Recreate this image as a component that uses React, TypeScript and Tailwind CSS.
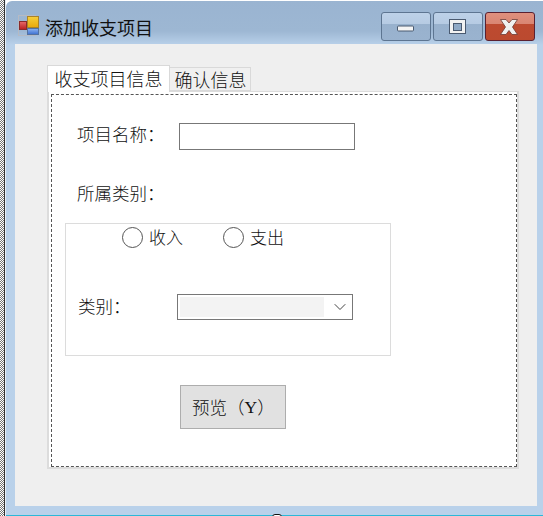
import React from 'react';
import { ChevronDown } from 'lucide-react';

const cjk = "font-['Noto_Sans_CJK_SC',sans-serif]";

const CaptionButton: React.FC<{ kind: 'min' | 'max' | 'close' }> = ({ kind }) => {
  const close = kind === 'close';
  return (
    <div
      className={
        'flex items-center justify-center w-[50px] h-[29px] rounded-[3px] border ' +
        (close
          ? 'border-[#5a2030] bg-[linear-gradient(#e0907e_0%,#d98572_41%,#bd4a30_41%,#bb4a2f_100%)]'
          : 'border-[#5d7591] bg-[linear-gradient(#bdd1e8_0%,#b6cbe3_41%,#98b1cd_41%,#9ab3cf_100%)]')
      }
    >
      <svg width="22" height="20" viewBox="0 0 22 20">
        {kind === 'min' && <rect x="2.500" y="9" width="16" height="5" rx="1" fill="#f4f4f4" stroke="#4a5a70" />}
        {kind === 'max' && (
          <>
            <rect x="2.500" y="2.500" width="16" height="14" fill="#f2f2f2" stroke="#4a5a70" />
            <rect x="6.500" y="6.500" width="8" height="7" fill="#8fa9c6" stroke="#4a5a70" />
          </>
        )}
        {kind === 'close' && (
          <path
            d="M1.500 2.500H7L10 6l3-3.500h5.500L13.500 10l5 7.500H13L10 13.500 7 17.500H1.500l5-7.500z"
            fill="#f0f0f0"
            stroke="#6d3a34"
            strokeWidth="0.8"
          />
        )}
      </svg>
    </div>
  );
};

const Radio: React.FC<{ label: string }> = ({ label }) => (
  <div className="flex items-center gap-[6px]">
    <span className="w-[21px] h-[21px] rounded-full border-[1.5px] border-[#555] bg-white" />
    <span className="text-[17px] leading-[22px] font-light text-[#111]">{label}</span>
  </div>
);

export default function App() {
  return (
    <div className={`relative flex w-[543px] h-[516px] overflow-hidden bg-white ${cjk}`}>
      {/* resize hatch */}
      <div className="w-[4px] bg-[repeating-conic-gradient(#777_0_25%,#fff_0_50%)] bg-[length:2px_2px]" />
      <div className="w-[1px] bg-[#333]" />
      <div className="w-[1px] bg-[#e8eef5]" />

      <div className="flex-1 flex flex-col mt-[1px] rounded-tl-[6px] bg-[linear-gradient(#9ab4d1_0px,#9db7d3_30px,#b9d1ea_44px,#b9d1ea_100%)]">
        {/* title bar */}
        <div className="h-[43px] flex pl-[12px] pr-[8px]">
          <div className="flex items-center gap-[6px] flex-1 pt-[9px]">
            <svg width="21" height="21" viewBox="0 0 21 21" className="-mt-[3px]">
              <defs>
                <linearGradient id="y" x1="0" y1="0" x2="0" y2="1">
                  <stop offset="0" stopColor="#f7cf3a" />
                  <stop offset="1" stopColor="#e9a90c" />
                </linearGradient>
                <linearGradient id="b" x1="0" y1="0" x2="0" y2="1">
                  <stop offset="0" stopColor="#8db4f2" />
                  <stop offset="1" stopColor="#3c6fd0" />
                </linearGradient>
                <linearGradient id="r" x1="0" y1="0" x2="0" y2="1">
                  <stop offset="0" stopColor="#e86a6a" />
                  <stop offset="1" stopColor="#b81e1e" />
                </linearGradient>
              </defs>
              <rect x="0.500" y="0.500" width="17" height="20" fill="none" stroke="#b5bac4" />
              <rect x="9.500" y="1.500" width="11" height="11" fill="url(#y)" stroke="#a9822a" />
              <rect x="9.500" y="13.500" width="11" height="6" fill="url(#b)" stroke="#54729f" />
              <rect x="1.500" y="6.500" width="7" height="8" fill="url(#r)" stroke="#8a2a2a" />
            </svg>
            <span className="text-[18px] leading-[24px] text-[#111]">添加收支项目</span>
          </div>
          <div className="flex gap-[2px] mt-[11px]">
            <CaptionButton kind="min" />
            <CaptionButton kind="max" />
            <CaptionButton kind="close" />
          </div>
        </div>

        {/* client area */}
        <div className="ml-[9px] mr-[6px] h-[462px] bg-[#efefef] pl-[32px] pr-[18px] pt-[21px]">
          <div className="flex items-end h-[27px] relative z-10">
            <div className="w-[123px] h-[27px] bg-white border border-b-0 border-[#d9d9d9] text-[18px] leading-[24px] font-light text-center text-[#111]">
              收支项目信息
            </div>
            <div className="w-[81px] h-[24px] mb-[1px] pl-[1px] bg-[#f0f0f0] border border-l-0 border-[#d9d9d9] text-[18px] leading-[23px] font-light text-center text-[#111]">
              确认信息
            </div>
          </div>
          <div className="h-[378px] -mt-[1px] bg-white border-2 border-[#dcdcdc] border-t-[1px] p-[2px] pr-0 pb-0">
            <div className="h-full border border-dashed border-[#555] pl-[13px] text-[17.500px] leading-[22px] font-light text-[#111]">
              <div className="flex items-center mt-[28px] h-[27px] pl-[12px]">
                <span className="w-[102px] pb-[5px]">项目名称：</span>
                <div className="w-[176px] h-[27px] border border-[#777] bg-white" />
              </div>
              <div className="mt-[32px] pl-[12px]">所属类别：</div>

              <div className="mt-[19px] w-[326px] h-[133px] border border-[#dcdcdc]">
                <div className="flex pl-[56px] gap-[40px] mt-[2px]">
                  <Radio label="收入" />
                  <Radio label="支出" />
                </div>
                <div className="flex items-center mt-[46px] pl-[12px]">
                  <span className="w-[99px] pb-[2px]">类别：</span>
                  <div className="flex items-center w-[176px] h-[26px] border border-[#777] p-[2px] bg-white">
                    <div className="w-[144px] h-full shrink-0 bg-[#f3f3f3]" />
                    <ChevronDown className="ml-[6px] w-[20px] h-[20px] shrink-0 text-[#444]" strokeWidth={1.2} />
                  </div>
                </div>
              </div>

              <div className="mt-[29px] ml-[115px] w-[106px] h-[44px] bg-[#e1e1e1] border border-[#adadad] pl-[11px] flex items-center">
                预览（<span className="font-['Liberation_Serif',serif]">Y</span>）
              </div>
            </div>
          </div>
        </div>
        <div className="flex-1" />
        <div className="h-[1px] bg-[#2bb8d8]" />
      </div>

      {/* sizing grip at the bottom edge */}
      <div className="absolute left-[272px] top-[514px] w-[10px] h-[4px] rounded-t-[3px] border border-[#111] bg-white" />
    </div>
  );
}
